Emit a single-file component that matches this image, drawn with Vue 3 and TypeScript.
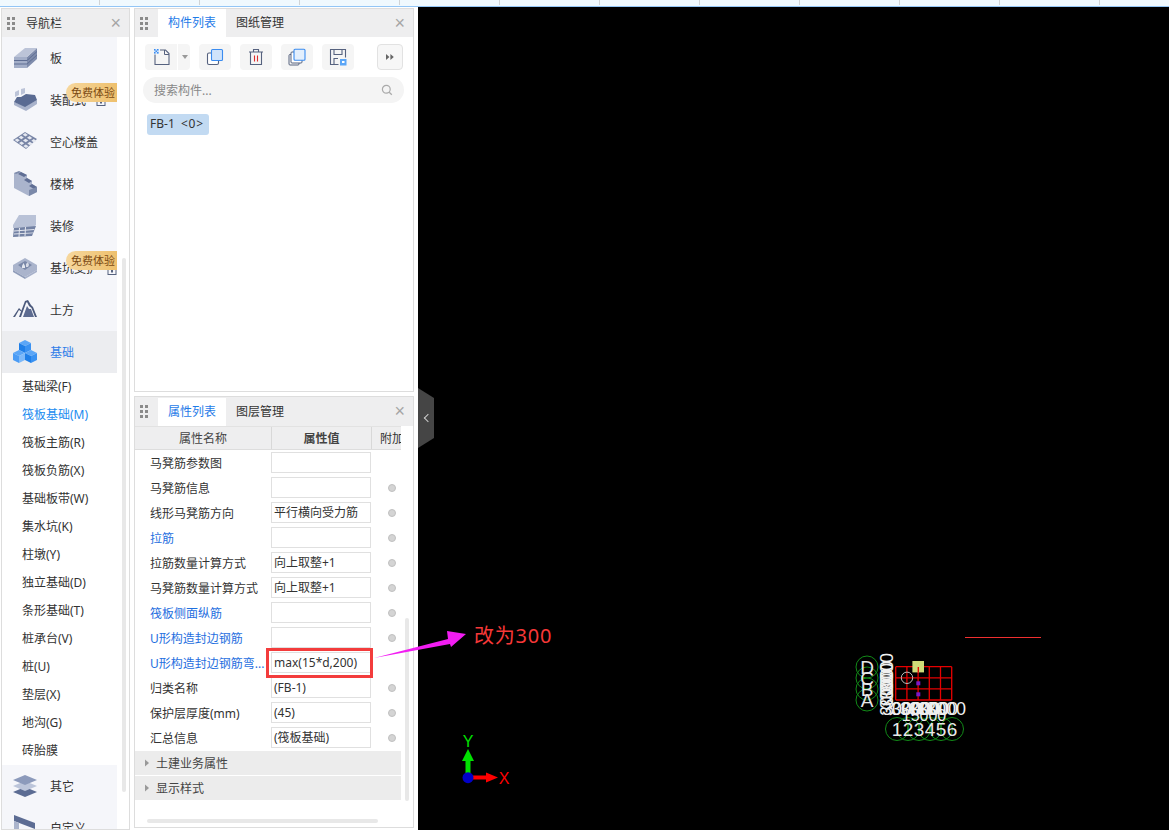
<script setup lang="ts">
interface Shape { p: string; f: string }
interface NavItem { label: string; icon: string; active?: boolean; badge?: boolean }

function hollowCells(): Shape[] {
  const out: Shape[] = [{ p: '0,11 12,3 24,10 13,20', f: '#7885a6' }]
  const n = 3
  const pt = (u: number, v: number) => `${(12 * u + 13 * v).toFixed(1)},${(11 - 8 * u + 9 * v).toFixed(1)}`
  for (let i = 0; i < n; i++) {
    for (let j = 0; j < n; j++) {
      const u0 = (i + 0.2) / n
      const u1 = (i + 0.82) / n
      const v0 = (j + 0.2) / n
      const v1 = (j + 0.82) / n
      out.push({ p: `${pt(u0, v0)} ${pt(u1, v0)} ${pt(u1, v1)} ${pt(u0, v1)}`, f: '#e6e9f1' })
    }
  }
  return out
}

const icons: Record<string, Shape[]> = {
  slab: [
    { p: '1,12 14,12 14,23 1,23', f: '#a3aec8' },
    { p: '14,12 24,3 24,14 14,23', f: '#7f8cac' },
    { p: '1,12 12,3 24,3 14,12', f: '#bcc4d8' },
    { p: '1,15 14,15 24,6 24,7 14,16 1,16', f: '#5e6d92' },
    { p: '1,18.5 14,18.5 24,9.5 24,10.5 14,19.5 1,19.5', f: '#5e6d92' },
  ],
  prefab: [
    { p: '1,15 1,18 13,24 24,17 24,13 12,19', f: '#a9b3cb' },
    { p: '1,15 12,20 24,13 22,8 13,7 8,10 4,10', f: '#5a6b92' },
    { p: '2,5 6,3 6,8 2,10', f: '#bcc4d8' },
    { p: '8,2 12,1 12,6 8,8', f: '#bcc4d8' },
  ],
  hollow: hollowCells(),
  stairs: [
    { p: '1,2 1,17 16,25 24,21 24,16 19,13 19,10 14,7 14,4 8,1', f: '#aab4cc' },
    { p: '1,2 6,0 8,1 3,3', f: '#7b89a9' },
    { p: '8,1 14,4 11,6 5,3', f: '#5f6e94' },
    { p: '14,7 19,10 16,12 11,9', f: '#5f6e94' },
    { p: '19,13 24,16 21,18 16,15', f: '#5f6e94' },
    { p: '16,19 24,16 24,21 16,25', f: '#7b89a9' },
  ],
  finish: [
    { p: '0,15 0,12 6,2 23,2 23,12 21,14', f: '#b9c2d7' },
    { p: '1,15 23,13 19,23 0,24', f: '#7382a4' },
    { p: '1,17.5 21.5,16 21,17 1,18.5', f: '#e4e7ef' },
    { p: '1,20.5 20.5,19.5 20,20.3 1,21.5', f: '#e4e7ef' },
    { p: '6,15 7,15 6.5,24 5.5,24', f: '#e4e7ef' },
    { p: '12,14 13,14 12.5,23 11.5,23', f: '#e4e7ef' },
  ],
  pit: [
    { p: '0,10 12,3 24,10 24,15 12,22 0,15', f: '#aab4cc' },
    { p: '5,10 12,6 19,10 12,15', f: '#7a88a8' },
    { p: '9,11 10.5,8 12,11 12,13 9,13', f: '#e4e7ef' },
    { p: '13,9 15,7 16,10 15,12 13,12', f: '#d5d9e5' },
    { p: '0,15 12,22 12,24 0,17', f: '#8f9cb9' },
    { p: '12,22 24,15 24,17 12,24', f: '#a7b1ca' },
  ],
  earth: [
    { p: '0,20 6,11 9,14 9,15 6,13 2,20', f: '#4c5a7c' },
    { p: '6,20 12,4 15,3 18,8 20,10 24,20 22,20 18.5,11 16,9 14,5 13,6 8,20', f: '#4c5a7c' },
    { p: '10,20 14,9 16,12 18,12 21,20', f: '#5d6b90' },
  ],
  foundation: [
    { p: '12,1 18,4 12,7 6,4', f: '#5ba6f7' },
    { p: '6,4 12,7 12,14 6,11', f: '#1f7fe8' },
    { p: '12,7 18,4 18,11 12,14', f: '#3a92f2' },
    { p: '6,11 12,14 6,17 0,14', f: '#5ba6f7' },
    { p: '0,14 6,17 6,24 0,21', f: '#4b9cf5' },
    { p: '6,17 12,14 12,21 6,24', f: '#7db9f9' },
    { p: '18,11 24,14 18,17 12,14', f: '#5ba6f7' },
    { p: '12,14 18,17 18,24 12,21', f: '#1f7fe8' },
    { p: '18,17 24,14 24,21 18,24', f: '#3a92f2' },
  ],
  other: [
    { p: '12,14 24,19 12,24 0,19', f: '#5c6c93' },
    { p: '12,8 24,13 12,18 0,13', f: '#bcc5da' },
    { p: '12,2 24,7 12,12 0,7', f: '#8c9abb' },
  ],
  custom: [
    { p: '1,0 22,8 22,14 1,6', f: '#5c6c93' },
    { p: '1,6 6,8 6,24 1,24', f: '#aab4cc' },
  ],
}

const topItems: NavItem[] = [
  { label: '板', icon: 'slab' },
  { label: '装配式', icon: 'prefab', badge: true },
  { label: '空心楼盖', icon: 'hollow' },
  { label: '楼梯', icon: 'stairs' },
  { label: '装修', icon: 'finish' },
  { label: '基坑支护', icon: 'pit', badge: true },
  { label: '土方', icon: 'earth' },
  { label: '基础', icon: 'foundation', active: true },
]
const subItems = ['基础梁(F)', '筏板基础(M)', '筏板主筋(R)', '筏板负筋(X)', '基础板带(W)', '集水坑(K)', '柱墩(Y)', '独立基础(D)', '条形基础(T)', '桩承台(V)', '桩(U)', '垫层(X)', '地沟(G)', '砖胎膜']
const bottomItems: NavItem[] = [
  { label: '其它', icon: 'other' },
  { label: '自定义', icon: 'custom' },
]

interface Row { name: string; value: string; link?: boolean; dot?: boolean }
const rows: Row[] = [
  { name: '马凳筋参数图', value: '' },
  { name: '马凳筋信息', value: '', dot: true },
  { name: '线形马凳筋方向', value: '平行横向受力筋', dot: true },
  { name: '拉筋', value: '', link: true, dot: true },
  { name: '拉筋数量计算方式', value: '向上取整+1', dot: true },
  { name: '马凳筋数量计算方式', value: '向上取整+1', dot: true },
  { name: '筏板侧面纵筋', value: '', link: true, dot: true },
  { name: 'U形构造封边钢筋', value: '', link: true, dot: true },
  { name: 'U形构造封边钢筋弯...', value: 'max(15*d,200)', link: true },
  { name: '归类名称', value: '(FB-1)', dot: true },
  { name: '保护层厚度(mm)', value: '(45)', dot: true },
  { name: '汇总信息', value: '(筏板基础)', dot: true },
]
const groups = ['土建业务属性', '显示样式']
const cells = Array.from({ length: 12 }, (_, i) => i)
const gridX = [895.7, 906.9, 918.1, 929.3, 940.5, 951.7]
const gridY = [666.7, 677.8, 688.9, 700]
const axisCircles = [
  { x: 867, y: 667, t: 'D' }, { x: 867, y: 678, t: 'C' }, { x: 867, y: 689, t: 'B' }, { x: 867, y: 700, t: 'A' },
]
const numCircles = [897, 908, 919, 930, 941, 952]
const sideDims = [693, 701, 709, 716]
const bottomDims = [882, 891, 900, 909, 918, 926]
</script>

<template>
  <div class="app">
    <div class="strip">
      <span v-for="c in cells" :key="c" class="strip-cell"></span>
    </div>
    <div class="main">
      <aside class="panel nav">
        <header class="head">
          <span class="grip"><i v-for="n in 6" :key="n"></i></span>
          <span class="nav-title">导航栏</span>
          <span class="close">×</span>
        </header>
        <div class="nav-body">
          <div class="nav-list">
            <div v-for="it in topItems" :key="it.label" class="nav-row" :class="{ on: it.active }">
              <svg class="nav-icon" viewBox="0 0 24 26" width="24" height="26">
                <polygon v-for="(s, i) in icons[it.icon]" :key="i" :points="s.p" :fill="s.f" />
              </svg>
              <span class="nav-label">{{ it.label }}</span>
              <svg v-if="it.badge" class="lock" :class="{ far: it.icon === 'pit' }" viewBox="0 0 10 10" width="10" height="10">
                <rect x="1" y="3" width="8" height="6.5" fill="none" stroke="#56627f" />
                <rect x="4" y="5" width="2" height="2.5" fill="#56627f" />
                <path d="M3 3V1.5h4V3" fill="none" stroke="#56627f" />
              </svg>
              <span v-if="it.badge" class="badge">免费体验</span>
            </div>
            <ul class="sub">
              <li v-for="(s, i) in subItems" :key="s" :class="{ on: i === 1 }">{{ s }}</li>
            </ul>
            <div v-for="it in bottomItems" :key="it.label" class="nav-row">
              <svg class="nav-icon" viewBox="0 0 24 26" width="24" height="26">
                <polygon v-for="(s, i) in icons[it.icon]" :key="i" :points="s.p" :fill="s.f" />
              </svg>
              <span class="nav-label">{{ it.label }}</span>
            </div>
          </div>
          <div class="nav-track"><span class="nav-thumb"></span></div>
        </div>
      </aside>

      <div class="mid">
        <section class="panel list-panel">
          <header class="head">
            <span class="grip"><i v-for="n in 6" :key="n"></i></span>
            <span class="tab active">构件列表</span>
            <span class="tab">图纸管理</span>
            <span class="close">×</span>
          </header>
          <div class="toolbar">
            <span class="tool split">
              <span class="split-main">
                <svg viewBox="0 0 18 18" width="18" height="18">
                  <path d="M3 6.5V16.5H17V5.5L13.5 2H8" fill="none" stroke="#56627f" stroke-width="1.1" />
                  <path d="M12.5 2V6.5H17" fill="none" stroke="#56627f" stroke-width="1" />
                  <rect x="2" y="1" width="5" height="5" fill="#cfe3fb" />
                  <path d="M2 1h1.5v1.5H2zM5 1h1.5v1.5H5zM3.5 2.5H5V4H3.5zM2 4h1.5v1.5H2zM5 4h1.5v1.5H5z" fill="#3b8cf0" />
                </svg>
              </span>
              <span class="split-arrow"></span>
            </span>
            <span class="tool">
              <svg viewBox="0 0 18 18" width="18" height="18">
                <rect x="1.5" y="5" width="11" height="11.5" rx="1.5" fill="#fff" stroke="#56627f" stroke-width="1.1" />
                <rect x="5.5" y="1.5" width="11" height="11" rx="1" fill="#cfe3fb" stroke="#3b8cf0" stroke-width="1.1" />
              </svg>
            </span>
            <span class="tool">
              <svg viewBox="0 0 18 18" width="18" height="18">
                <path d="M2 4H16M6.5 4V1.5H11.5V4M3.5 4V16.5H14.5V4" fill="none" stroke="#56627f" stroke-width="1.1" />
                <path d="M7.5 7.5V13.5M10.5 7.5V13.5" stroke="#e02b2b" stroke-width="1.1" />
              </svg>
            </span>
            <span class="tool">
              <svg viewBox="0 0 18 18" width="18" height="18">
                <rect x="1" y="6.5" width="10" height="10.5" rx="1" fill="none" stroke="#56627f" stroke-width="1" />
                <rect x="3" y="4" width="11" height="11" rx="1" fill="#fff" stroke="#56627f" stroke-width="1" />
                <rect x="6" y="1.2" width="11" height="11" rx="1" fill="#e3effd" stroke="#3b8cf0" stroke-width="1.1" />
              </svg>
            </span>
            <span class="tool">
              <svg viewBox="0 0 18 18" width="18" height="18">
                <path d="M9.5 16.5H1.5V1.5H16.5V9.5M5 1.5V6.5H13V1.5M5 16.5V10.5H9" fill="none" stroke="#56627f" stroke-width="1.1" />
                <rect x="11" y="11" width="6.5" height="6.5" fill="#5ba6f7" />
                <rect x="13" y="13" width="2.5" height="2" fill="#fff" />
              </svg>
            </span>
            <span class="tool more">
              <svg viewBox="0 0 10 8" width="10" height="8"><path d="M1 1L4.4 4L1 7ZM5.4 1L8.8 4L5.4 7Z" fill="#666" /></svg>
            </span>
          </div>
          <div class="search">
            <span>搜索构件...</span>
            <svg viewBox="0 0 12 12" width="12" height="12">
              <circle cx="5.3" cy="5.3" r="3.9" fill="none" stroke="#aaa" stroke-width="1.2" />
              <path d="M8.2 8.2L10.8 10.8" stroke="#aaa" stroke-width="1.3" />
            </svg>
          </div>
          <div class="chip">FB-1 <small>&lt;0&gt;</small></div>
        </section>

        <section class="panel prop-panel">
          <header class="head tall">
            <span class="grip"><i v-for="n in 6" :key="n"></i></span>
            <span class="tab active">属性列表</span>
            <span class="tab">图层管理</span>
            <span class="close">×</span>
          </header>
          <div class="prop-body">
            <div class="prop-table">
              <div class="thead">
                <span class="th-name">属性名称</span>
                <span class="th-val">属性值</span>
                <span class="th-add">附加</span>
              </div>
              <div v-for="r in rows" :key="r.name" class="row">
                <span class="r-name" :class="{ link: r.link }">{{ r.name }}</span>
                <span class="r-val">{{ r.value }}</span>
                <span class="r-add"><i v-if="r.dot" class="dot"></i></span>
              </div>
              <div class="groups">
                <div v-for="g in groups" :key="g" class="group">
                  <svg viewBox="0 0 6 8" width="6" height="8"><path d="M1 0.5L5 4L1 7.5Z" fill="#999" /></svg>
                  <span>{{ g }}</span>
                </div>
              </div>
            </div>
            <div class="v-track"><span class="v-thumb"></span></div>
          </div>
          <div class="h-track"></div>
        </section>
      </div>

      <div class="canvas">
        <svg class="cad" viewBox="418 7 751 823" width="751" height="823">
          <line x1="965" y1="637.5" x2="1041" y2="637.5" stroke="#f03030" />
          <!-- axis marker -->
          <rect x="465.5" y="758" width="5" height="18" fill="#00e000" />
          <polygon points="468,749 474,761 462,761" fill="#00e000" />
          <rect x="470" y="775.5" width="16" height="4" fill="#ff0000" />
          <polygon points="498,777.5 486,772.5 486,782.5" fill="#ff0000" />
          <circle cx="468" cy="777.7" r="5.5" fill="#0000c8" />
          <text x="468" y="747" class="ax green">Y</text>
          <text x="504" y="784" class="ax red">X</text>
          <!-- left axis bubbles -->
          <circle v-for="a in axisCircles" :key="a.t" :cx="a.x" :cy="a.y" r="11" fill="none" stroke="#128a18" />
          <text v-for="a in axisCircles" :key="a.t + 't'" :x="a.x" :y="a.y + 6.5" class="lab">{{ a.t }}</text>
          <!-- bottom bubbles -->
          <circle v-for="n in numCircles" :key="n" :cx="n" cy="729" r="11.5" fill="none" stroke="#128a18" />
          <text v-for="(n, i) in numCircles" :key="n + 't'" :x="n" y="736" class="lab">{{ i + 1 }}</text>
          <!-- dims -->
          <text v-for="y in sideDims" :key="'s' + y" class="dim" :transform="`translate(893 ${y}) rotate(-90)`">3000</text>
          <text v-for="x in bottomDims" :key="'b' + x" :x="x" y="715" class="dim">3000</text>
          <text x="924" y="721" class="dim mid-t">15000</text>
          <!-- grid -->
          <line v-for="x in gridX" :key="'v' + x" :x1="x" :x2="x" y1="666.7" y2="700" stroke="#e60000" stroke-width="1.3" />
          <line v-for="y in gridY" :key="'h' + y" x1="895.7" x2="951.7" :y1="y" :y2="y" stroke="#e60000" stroke-width="1.3" />
          <rect x="912.4" y="661" width="11.6" height="11.4" fill="#cfdc79" />
          <line x1="918.3" x2="918.3" y1="667" y2="672.4" stroke="#e60000" stroke-width="1.3" />
          <circle cx="907" cy="677.8" r="5.7" fill="none" stroke="#bbb" />
          <rect x="916.3" y="681.3" width="4" height="4" fill="#7a18c8" />
          <rect x="916.3" y="692.3" width="4" height="4" fill="#7a18c8" />
        </svg>
        <div class="handle"><span></span></div>
      </div>
    </div>

    <div class="red-box"></div>
    <svg class="pointer" viewBox="0 0 100 34" width="100" height="34">
      <polygon points="4,30 78,11 77,3 96,6 81,19 80,16" fill="#f21df2" />
    </svg>
    <div class="note">改为300</div>
  </div>
</template>

<style>
html, body { margin: 0; background: #fff; }
</style>

<style scoped>
.app {
  position: relative;
  width: 1169px;
  height: 830px;
  overflow: hidden;
  background: #fff;
  font-family: "Noto Sans", "Noto Sans CJK SC", sans-serif;
  font-size: 12px;
  color: #333;
  display: flex;
  flex-direction: column;
}
.strip {
  height: 6px;
  flex: none;
  display: flex;
  background: #f0f9fe;
  border-bottom: 1px solid #93c6f6;
}
.strip-cell { width: 99px; border-right: 1px solid #cfd3d6; flex: none; margin-bottom: 1px; }
.main { flex: 1; display: flex; min-height: 0; }

.panel { border: 1px solid #ddd; box-sizing: border-box; background: #fff; }
.head { height: 28px; display: flex; align-items: center; background: #eeeeef; flex: none; position: relative; }
.head.tall { height: 29px; }
.grip { width: 8px; margin-left: 5px; display: grid; grid-template-columns: 3px 3px; gap: 2px; flex: none; }
.grip i { width: 3px; height: 3px; background: #8a8a8a; }
.close { position: absolute; right: 8px; top: 3px; font-size: 18px; line-height: 22px; color: #a5a5a5; font-family: "Liberation Sans", sans-serif; }

.nav { width: 129px; margin: 1px 0 0 1px; height: 822px; overflow: hidden; display: flex; flex-direction: column; flex: none; }
.nav-title { margin-left: 11px; color: #333; }
.nav-body { flex: 1; display: flex; min-height: 0; overflow: hidden; }
.nav-list { width: 115px; flex: none; }
.nav-row { height: 42px; background: #f5f6fa; display: flex; align-items: center; padding-left: 11px; position: relative; box-sizing: border-box; }
.nav-row.on { background: #ecedf0; }
.nav-row.on .nav-label { color: #2f7de8; }
.nav-icon { flex: none; }
.nav-label { margin-left: 13px; white-space: nowrap; }
.badge {
  position: absolute;
  left: 64px;
  top: 4px;
  width: 51px;
  height: 19px;
  line-height: 19px;
  font-size: 11px;
  padding-left: 5px;
  box-sizing: border-box;
  white-space: nowrap;
  border-radius: 10px 0 0 10px;
  background: linear-gradient(90deg, #f6d79d, #eec06d);
  color: #7b4a12;
}
.lock { position: absolute; left: 94px; top: 17px; }
.lock.far { left: 105px; top: 18px; }
.sub { list-style: none; margin: 0; padding: 0; }
.sub li { height: 28px; line-height: 28px; padding-left: 20px; }
.sub li.on { color: #1a8cf0; }
.nav-track { width: 4px; margin-left: 5px; flex: none; position: relative; }
.nav-thumb { position: absolute; left: 0; top: 221px; width: 4px; height: 534px; background: #e8e8e8; border-radius: 2px; }

.mid { width: 280px; margin: 1px 0 0 4px; flex: none; display: flex; flex-direction: column; gap: 4px; }
.list-panel { height: 384px; flex: none; }
.prop-panel { height: 432px; flex: none; position: relative; display: flex; flex-direction: column; }
.tab { height: 28px; line-height: 28px; padding: 0 10px; color: #333; flex: none; }
.tab.active { background: #fff; color: #1f7be8; margin-left: 10px; }
.toolbar { display: flex; padding: 7px 9px 0 10px; height: 26px; }
.tool { height: 26px; width: 32px; border-radius: 4px; background: #f5f5f5; display: flex; align-items: center; justify-content: center; margin-right: 9px; flex: none; }
.tool.split { width: 45px; justify-content: flex-start; margin-right: 9px; }
.split-main { width: 32px; height: 26px; display: flex; align-items: center; justify-content: center; border-right: 1px solid #fff; flex: none; }
.split-arrow { margin-left: 4px; width: 0; height: 0; border: 3px solid transparent; border-top: 4px solid #999; border-bottom: 0; }
.tool.more { width: 26px; margin: 0 0 0 14px; background: #f7f7f7; box-sizing: border-box; border: 1px solid #e2e2e2; }
.search {
  margin: 7px 9px 0 8px;
  height: 26px;
  border-radius: 13px;
  background: #f4f4f4;
  color: #888;
  display: flex;
  align-items: center;
  justify-content: space-between;
  padding: 0 11px 1px;
  box-sizing: border-box;
}
.chip {
  margin: 11px 0 0 12px;
  width: 62px;
  height: 21px;
  line-height: 20px;
  box-sizing: border-box;
  padding-left: 3px;
  border-radius: 3px;
  background: #c2daf2;
  color: #333;
  white-space: nowrap;
}
.chip small { font-size: 12px; margin-left: 3px; letter-spacing: .8px; }

.prop-body { display: flex; flex: 1; min-height: 0; }
.prop-table { width: 266px; flex: none; }
.thead { height: 24px; display: flex; background: #eeeeef; border-top: 1px solid #e2e2e2; border-bottom: 1px solid #ddd; box-sizing: border-box; text-align: center; line-height: 24px; overflow: hidden; }
.th-name { width: 136px; flex: none; color: #444; }
.th-val { width: 101px; flex: none; font-weight: 700; color: #444; border-left: 1px solid #d8d8d8; border-right: 1px solid #d8d8d8; box-sizing: border-box; }
.th-add { flex: 1; white-space: nowrap; overflow: hidden; text-align: left; padding-left: 8px; }
.row { height: 25px; display: flex; align-items: center; }
.r-name { width: 136px; padding-left: 15px; box-sizing: border-box; flex: none; white-space: nowrap; overflow: hidden; }
.r-name.link { color: #1f6fe0; }
.r-val { width: 100px; height: 21px; line-height: 19px; border: 1px solid #e0e0e0; box-sizing: border-box; padding-left: 2px; flex: none; white-space: nowrap; overflow: hidden; }
.r-add { flex: 1; display: flex; justify-content: center; padding-left: 12px; }
.dot { width: 8px; height: 8px; border-radius: 50%; background: #d4d4d4; border: 1px solid #c0c0c0; box-sizing: border-box; display: block; }
.groups { margin-top: 1px; }
.group { height: 24px; background: #ececec; display: flex; align-items: center; margin-bottom: 1px; padding-left: 9px; color: #444; }
.group span { margin-left: 6px; }
.v-track { width: 4px; margin-left: 4px; position: relative; }
.v-thumb { position: absolute; left: 0; top: 192px; height: 183px; width: 4px; background: #e8e8e8; border-radius: 2px; }
.h-track { position: absolute; left: 12px; bottom: 4px; width: 231px; height: 4px; border-radius: 2px; background: #e8e8e8; }

.canvas { position: relative; flex: 1; margin-left: 4px; background: #000; min-width: 0; }
.cad { position: absolute; left: 0; top: 0; }
.ax { font-family: "Liberation Sans", sans-serif; font-size: 16px; text-anchor: middle; }
.green { fill: #00e000; }
.red { fill: #ff0000; }
.lab { fill: #e8e8e8; font-family: "Liberation Sans", sans-serif; font-size: 19px; text-anchor: middle; }
.dim { fill: #f0f0f0; font-family: "Liberation Sans", sans-serif; font-size: 18px; }
.dim.mid-t { font-size: 16px; text-anchor: middle; }
.handle {
  position: absolute;
  left: 0;
  top: 381px;
  width: 16px;
  height: 60px;
  background: #454545;
  clip-path: polygon(0 0, 100% 10px, 100% 50px, 0 100%);
  display: flex;
  align-items: center;
  justify-content: center;
}
.handle span { width: 5px; height: 5px; border-left: 1px solid #ccc; border-bottom: 1px solid #ccc; transform: rotate(45deg); margin-left: 3px; }

.red-box { position: absolute; left: 266px; top: 648px; width: 107px; height: 30px; box-sizing: border-box; border: 3px solid #f33c3c; }
.pointer { position: absolute; left: 370px; top: 628px; }
.note { position: absolute; left: 474px; top: 622px; font-size: 20px; line-height: 28px; color: #f73838; white-space: nowrap; letter-spacing: .8px; }
</style>
